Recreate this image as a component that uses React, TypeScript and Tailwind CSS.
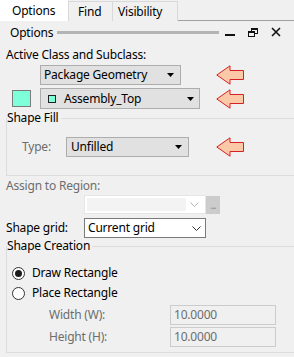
import React from "react";

function RedArrow() {
  return (
    <svg width="28" height="20" viewBox="0 0 28 20" className="shrink-0">
      <polygon
        points="0.8,10 14,0.8 14,5.5 27.5,5.5 27.5,14.5 14,14.5 14,19.2"
        fill="#fbc8a8"
        stroke="#d42222"
        strokeWidth="1"
      />
    </svg>
  );
}

function Tri() {
  return (
    <svg width="7" height="4" viewBox="0 0 7 4" className="shrink-0">
      <polygon points="0,0 7,0 3.5,4" fill="#000" />
    </svg>
  );
}

function Chevron({ color }: { color: string }) {
  return (
    <svg width="9" height="5" viewBox="0 0 9 5" className="shrink-0">
      <polyline points="0.5,0.5 4.5,4.5 8.5,0.5" fill="none" stroke={color} strokeWidth="1" />
    </svg>
  );
}

function Radio({ checked }: { checked?: boolean }) {
  return (
    <div className="w-[13px] h-[13px] rounded-full border border-[#333] bg-white flex items-center justify-center shrink-0">
      {checked && <div className="w-[7px] h-[7px] rounded-full bg-[#1a1a1a]" />}
    </div>
  );
}

export default function App() {
  return (
    <div className="w-[294px] h-[357px] bg-[#f0f0f0] overflow-hidden flex flex-col font-['Noto_Sans',sans-serif] text-[12px] leading-[16px] tracking-[-0.2px] text-black">
      {/* Tabs */}
      <div className="h-[21px] flex items-end shrink-0">
        <div className="w-[68px] h-[21px] bg-white pl-[12px] flex items-center">Options</div>
        <div className="w-[44px] h-[20px] border-l border-t border-[#d9d9d9] pl-[9px] flex items-center">Find</div>
        <div className="w-[66px] h-[20px] border-l border-t border-r border-[#d9d9d9] pl-[5px] flex items-center">Visibility</div>
        <div className="flex-1 h-[21px] border-b border-[#a0a0a0]" />
      </div>

      {/* Title row */}
      <div className="h-[23px] flex items-center pl-[10px] shrink-0">
        <span>Options</span>
        <div className="flex-1 h-[3px] bg-[#b4b4b4] ml-[4px]" />
        <div className="w-[75px] flex items-center h-full">
          <div className="ml-[6px] w-[10px] h-[2px] bg-[#111] mt-[5px]" />
          <svg width="10" height="9" viewBox="0 0 10 9" className="ml-[13px] mb-[1px]">
            <rect x="3.5" y="0.5" width="6" height="5" fill="none" stroke="#111" strokeWidth="1" />
            <rect x="3.5" y="0.5" width="6" height="1.5" fill="#111" />
            <rect x="0.5" y="3.5" width="6" height="5" fill="#f0f0f0" stroke="#111" strokeWidth="1" />
            <rect x="0.5" y="3.5" width="6" height="1.5" fill="#111" />
          </svg>
          <svg width="10" height="10" viewBox="0 0 10 10" className="ml-[13px] mb-[1px]">
            <path d="M1 1 L9 9 M9 1 L1 9" stroke="#111" strokeWidth="1.6" />
          </svg>
        </div>
      </div>

      {/* Active class label */}
      <div className="h-[16px] mt-[3px] pl-[6px] flex items-center shrink-0">Active Class and Subclass:</div>

      {/* Package Geometry */}
      <div className="h-[20px] mt-[2px] flex items-center pl-[40px] shrink-0">
        <div className="w-[141px] h-[20px] bg-[#e1e1e1] border border-[#adadad] flex items-center pl-[3px] pr-[6px]">
          <span className="flex-1">Package Geometry</span>
          <Tri />
        </div>
        <div className="ml-[35px]">
          <RedArrow />
        </div>
      </div>

      {/* Assembly_Top */}
      <div className="h-[21px] mt-[3px] flex items-center shrink-0">
        <div className="ml-[12px] w-[19px] h-[17px] bg-[#7dffd9] border border-[#7a7a7a]" />
        <div className="ml-[9px] w-[160px] h-[21px] bg-[#e1e1e1] border border-[#adadad] flex items-center pl-[7px] pr-[5px]">
          <div className="w-[8px] h-[8px] bg-[#7dffd9] border border-[#222] shrink-0" />
          <span className="flex-1 ml-[8px]">Assembly_Top</span>
          <Tri />
        </div>
        <div className="ml-[16px]">
          <RedArrow />
        </div>
      </div>

      {/* Shape Fill */}
      <fieldset className="mt-[2px] ml-[6px] border-l border-t border-b border-[#dcdcdc] pb-[18px] shrink-0">
        <legend className="h-[14px] leading-[14px] pr-[2px]">Shape Fill</legend>
        <div className="mt-[12px] h-[20px] flex items-center pl-[15px]">
          <span className="w-[44px] text-[#6d6d6d]">Type:</span>
          <div className="w-[123px] h-[20px] bg-[#e1e1e1] border border-[#adadad] flex items-center pl-[4px] pr-[6px]">
            <span className="flex-1">Unfilled</span>
            <Tri />
          </div>
          <div className="ml-[27px]">
            <RedArrow />
          </div>
        </div>
      </fieldset>

      {/* Assign to Region */}
      <div className="h-[16px] mt-[2px] pl-[6px] flex items-center text-[#6d6d6d] shrink-0">Assign to Region:</div>
      <div className="h-[19px] mt-[1px] flex items-center pl-[84px] shrink-0">
        <div className="w-[122px] h-[19px] bg-white border border-[#e6e6e6] flex items-center p-[2px]">
          <div className="flex-1 h-full bg-[#f3f3f3]" />
          <div className="w-[17px] flex justify-center">
            <Chevron color="#b5b5b5" />
          </div>
        </div>
        <div className="w-[14px] h-[18px] bg-[#cccccc] flex items-center justify-center text-[#8a8a8a] text-[10px] leading-[10px] tracking-[-1px]">
          ...
        </div>
      </div>

      {/* Shape grid */}
      <div className="h-[20px] mt-[4px] flex items-center pl-[6px] shrink-0">
        <span className="w-[78px]">Shape grid:</span>
        <div className="w-[122px] h-[20px] bg-white border border-[#7a7a7a] flex items-center pl-[3px] pr-[4px]">
          <span className="flex-1">Current grid</span>
          <Chevron color="#333" />
        </div>
      </div>

      {/* Shape Creation */}
      <fieldset className="mt-[1px] ml-[6px] border-l border-t border-b border-[#dcdcdc] pb-[5px] shrink-0">
        <legend className="h-[14px] leading-[14px] pr-[2px]">Shape Creation</legend>
        <div className="mt-[10px] h-[20px] flex items-center pl-[5px]">
          <Radio checked />
          <span className="ml-[7px]">Draw Rectangle</span>
        </div>
        <div className="h-[20px] flex items-center pl-[5px]">
          <Radio />
          <span className="ml-[7px]">Place Rectangle</span>
        </div>
        <div className="mt-[2px] h-[20px] flex items-center pl-[42px]">
          <span className="w-[121px] text-[#6d6d6d]">Width (W):</span>
          <div className="w-[106px] h-[20px] border border-[#cccccc] flex items-center pl-[3px] text-[#6d6d6d]">10.0000</div>
        </div>
        <div className="mt-[2px] h-[20px] flex items-center pl-[42px]">
          <span className="w-[121px] text-[#6d6d6d]">Height (H):</span>
          <div className="w-[106px] h-[20px] border border-[#cccccc] flex items-center pl-[3px] text-[#6d6d6d]">10.0000</div>
        </div>
      </fieldset>
    </div>
  );
}
